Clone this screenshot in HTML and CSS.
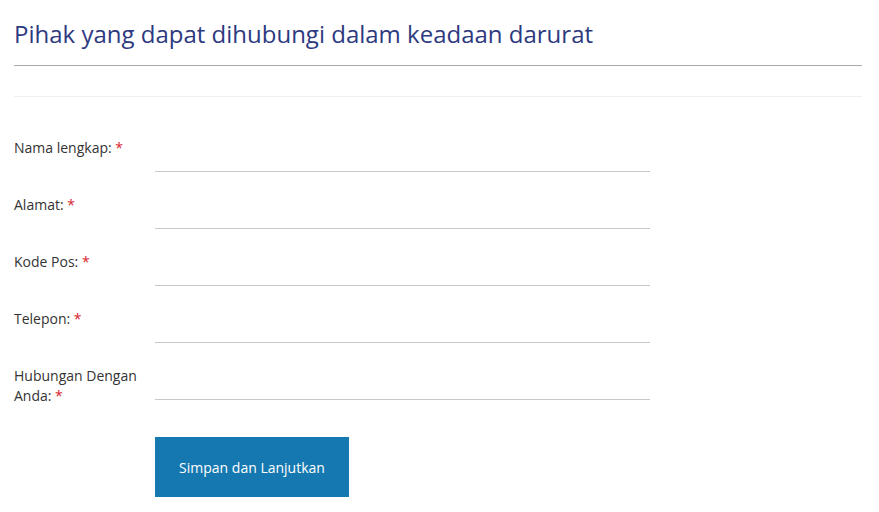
FILE: index.html
```html
<!DOCTYPE html>
<html lang="id">
<head>
    <meta charset="UTF-8">
    <title>Kontak Darurat</title>
    <link rel="stylesheet" href="styles.css">
</head>
<body>
    <h2 class="judul">Pihak yang dapat dihubungi dalam keadaan darurat</h2>
    <div class="pemisah"></div>

    <form class="form-darurat" onsubmit="return false">
        <div class="form-row">
            <label for="nama">Nama lengkap: <span class="wajib">*</span></label>
            <input type="text" id="nama">
        </div>
        <div class="form-row">
            <label for="alamat">Alamat: <span class="wajib">*</span></label>
            <input type="text" id="alamat">
        </div>
        <div class="form-row">
            <label for="kodepos">Kode Pos: <span class="wajib">*</span></label>
            <input type="text" id="kodepos">
        </div>
        <div class="form-row">
            <label for="telepon">Telepon: <span class="wajib">*</span></label>
            <input type="text" id="telepon">
        </div>
        <div class="form-row">
            <label for="hubungan">Hubungan Dengan Anda: <span class="wajib">*</span></label>
            <input type="text" id="hubungan">
        </div>
        <div class="form-actions">
            <button type="submit">Simpan dan Lanjutkan</button>
        </div>
    </form>
</body>
</html>
```

FILE: styles.css
```css
body {
    margin: 0;
    padding: 0 17px 0 14px;
    font-family: "Open Sans", Arial, sans-serif;
    background-color: #fff;
    color: #333;
}
.judul {
    margin: 19px 0 0;
    padding-bottom: 17px;
    font-size: 24px;
    font-weight: normal;
    line-height: 29px;
    color: #2d3a80;
    border-bottom: 1px solid #a9a9a9;
}
.pemisah {
    height: 30px;
    border-bottom: 1px solid #f0f0f0;
}
.form-darurat {
    padding-top: 41px;
}
.form-row {
    display: flex;
    align-items: flex-start;
    margin-bottom: 23px;
}
.form-row label {
    width: 128px;
    padding-right: 13px;
    font-size: 14px;
    line-height: 20px;
}
.wajib {
    color: #d9242b;
}
.form-row input {
    width: 495px;
    height: 33px;
    padding: 0;
    border: none;
    border-bottom: 1px solid #c8c8c8;
    font-family: inherit;
    font-size: 14px;
    outline: none;
}
.form-actions {
    padding-left: 141px;
    padding-top: 8px;
}
button {
    width: 194px;
    height: 60px;
    background-color: #1578b0;
    color: #fff;
    border: none;
    font-family: inherit;
    font-size: 14px;
    cursor: pointer;
}
button:hover {
    background-color: #0f6394;
}
```
